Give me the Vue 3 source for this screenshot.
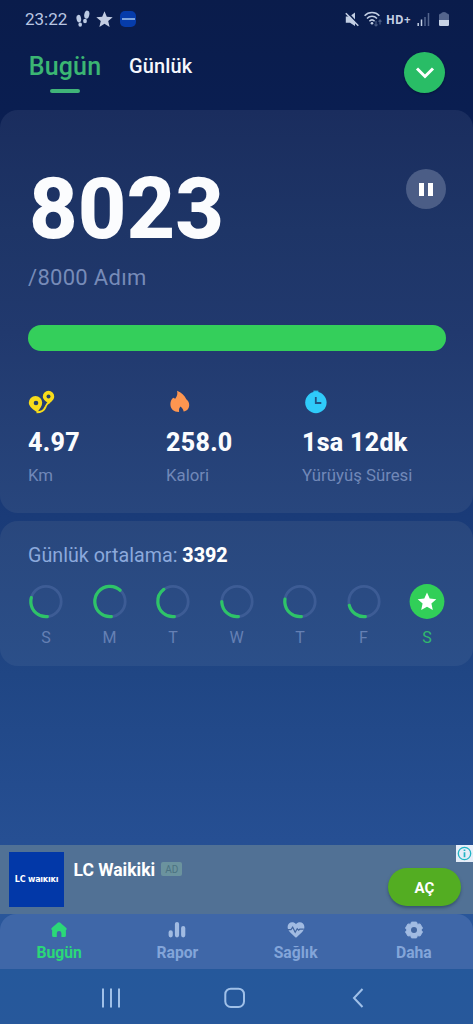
<script setup>
const stats = [
  { icon: 'route', value: '4.97', label: 'Km' },
  { icon: 'flame', value: '258.0', label: 'Kalori' },
  { icon: 'clock', value: '1sa 12dk', label: 'Yürüyüş Süresi' },
]
const days = [
  { name: 'S', arc: 105 },
  { name: 'M', arc: 222 },
  { name: 'T', arc: 143 },
  { name: 'W', arc: 90 },
  { name: 'T', arc: 99 },
  { name: 'F', arc: 75 },
  { name: 'S', done: true },
]
const tabs = [
  { icon: 'home', label: 'Bugün', active: true },
  { icon: 'chart', label: 'Rapor' },
  { icon: 'heart', label: 'Sağlık' },
  { icon: 'gear', label: 'Daha' },
]
</script>

<template>
  <div class="screen">
    <header class="status">
      <span class="time">23:22</span>
      <svg class="steps" width="14" height="18" viewBox="0 0 14 18">
        <g fill="#bccbe4">
          <ellipse cx="2.800" cy="8.600" rx="2.300" ry="3.800" transform="rotate(-10 3 8.600)" />
          <ellipse cx="4.200" cy="14.600" rx="1.800" ry="2.200" />
          <ellipse cx="10.800" cy="4.600" rx="2.500" ry="4.100" transform="rotate(12 10.600 4.600)" />
          <ellipse cx="9" cy="11" rx="1.900" ry="2.300" />
        </g>
      </svg>
      <svg class="star" width="17" height="17" viewBox="0 0 17 17">
        <path d="M8.500 0.300l2.300 5.400 5.900.5-4.500 3.900 1.400 5.800-5.100-3.100-5.100 3.100 1.400-5.800L.3 6.200l5.900-.5z" fill="#c3cde2" />
      </svg>
      <span class="app-chip"><i></i></span>
      <span class="grow"></span>
      <svg class="mute" width="14" height="15" viewBox="0 0 14 15">
        <path d="M.8 4.500h3.700L10 .5v13.500L5 10.700H.8z" fill="#c3cfe4" />
        <path d="M2 0l12 13" stroke="#0a1d4d" stroke-width="1.800" />
        <path d="M.8 1.300l12.500 12.500" stroke="#c3cfe4" stroke-width="1.600" />
      </svg>
      <svg class="wifi" width="19" height="16" viewBox="0 0 19 16">
        <g fill="none" stroke="#c3cfe4" stroke-width="1.500">
          <path d="M.6 4.700c4-4.300 10.800-4.300 14.800 0" />
          <path d="M3 7.500c2.800-2.900 7.200-2.900 10 0" />
          <path d="M5.400 10.200c1.500-1.500 3.700-1.500 5.200 0" />
        </g>
        <circle cx="8" cy="12.300" r="1.300" fill="#c3cfe4" />
        <path d="M12 10v5m-1.500-1.500L12 15l1.500-1.500M16 13.500V9m-1.500 1.700L16 9l1.500 1.700" fill="none" stroke="#485a83" stroke-width="1.200" />
      </svg>
      <span class="hd">HD+</span>
      <svg class="signal" width="13" height="13" viewBox="0 0 13 13">
        <path d="M1.200 10v3M4.500 6.500V13" stroke="#c3cfe4" stroke-width="1.500" />
        <path d="M8 4v9M11.500 0v13" stroke="#54658d" stroke-width="1.500" />
      </svg>
      <svg class="battery" width="10" height="14" viewBox="0 0 10 14">
        <path d="M0 8V3q0-1.500 2-1.500Q2.500 0 5 0t3 1.500q2 0 2 1.500v5z" fill="#54658d" />
        <path d="M0 8h10v4.700q0 1.300-1.300 1.300H1.300Q0 14 0 12.700z" fill="#c8d3e6" />
      </svg>
    </header>

    <nav class="views">
      <span class="view current">Bugün<i></i></span>
      <span class="view">Günlük</span>
      <span class="expand">
        <svg width="20" height="14" viewBox="0 0 20 14">
          <path d="M2 2.500l8 8 8-8" fill="none" stroke="#fff" stroke-width="3" />
        </svg>
      </span>
    </nav>

    <section class="card today">
      <div class="count-row">
        <span class="count">8023</span>
        <span class="pause"><i></i><i></i></span>
      </div>
      <div class="goal">/8000 Adım</div>
      <div class="bar"></div>
      <div class="stats">
        <div v-for="s in stats" :key="s.label" class="stat">
          <svg v-if="s.icon === 'route'" width="28" height="24" viewBox="0 0 28 24">
            <path d="M8.500 22.300q7 0 9-5.500 1-3 4-5" fill="none" stroke="#f7dc1b" stroke-width="2" />
            <path d="M7.500 6a6.700 6.700 0 0 1 6.700 6.700c0 3.500-2.500 6.300-4.700 9.300C6 20.500.8 16.500.8 12.700A6.700 6.700 0 0 1 7.500 6z" fill="#f7dc1b" />
            <path d="M20.500.8a5.700 5.700 0 0 1 5.700 5.700c0 3.500-3 5-5.200 7.200-2.200-1.700-6.200-3.700-6.200-7.200A5.700 5.700 0 0 1 20.500.8z" fill="#f7dc1b" />
            <circle cx="8" cy="13" r="2.300" fill="#24406b" />
            <circle cx="20.500" cy="6.500" r="2" fill="#24406b" />
          </svg>
          <svg v-else-if="s.icon === 'flame'" width="28" height="24" viewBox="0 0 28 24">
            <path d="M11 .8c4.500 1.700 7.500 4.800 9.300 8.500 1.900 1.500 2.900 3.500 2.900 5.600 0 3.600-2.300 6-5.600 6.700-.2-2.100-1.500-3.700-3.200-5-1.200 1.500-1.600 3-1.300 5.300-5.100.1-8.700-2.700-8.700-7.700 0-2.600 1-4.800 2.800-6.400l2 1C11.300 6 11.800 3.500 11 .8z" fill="#fd9650" />
          </svg>
          <svg v-else width="28" height="24" viewBox="0 0 28 24">
            <path d="M11.400.6h5v4h-5z" fill="#25bdec" />
            <circle cx="13.900" cy="12.500" r="10.700" fill="#2fcbfa" />
            <path d="M13.800 7v6h5.500" fill="none" stroke="#205383" stroke-width="1.800" />
          </svg>
          <strong>{{ s.value }}</strong>
          <span>{{ s.label }}</span>
        </div>
      </div>
    </section>

    <section class="card week">
      <div class="average">Günlük ortalama: <b>3392</b></div>
      <div class="days">
        <div v-for="(d, i) in days" :key="i" class="day" :class="{ done: d.done }">
          <svg width="36" height="36" viewBox="0 0 36 36">
            <template v-if="d.done">
              <circle cx="18" cy="18.500" r="17.400" fill="#31cf58" />
              <path d="M18 9.500l2.700 6 6.600.7-4.900 4.400 1.400 6.500-5.800-3.300-5.800 3.300 1.400-6.500-4.900-4.400 6.600-.7z" fill="#fff" />
            </template>
            <template v-else>
              <circle cx="18" cy="18.500" r="15.200" fill="none" stroke="#3d5c95" stroke-width="2.800" />
              <circle cx="18" cy="18.500" r="15.200" fill="none" stroke="#2ec468" stroke-width="3.200" stroke-linecap="round" pathLength="360" :stroke-dasharray="`${d.arc + 5} 360`" transform="rotate(85 18 18.500)" />
            </template>
          </svg>
          <span>{{ d.name }}</span>
        </div>
      </div>
    </section>

    <aside class="ad">
      <div class="brand">LC waıĸıĸı</div>
      <div class="ad-title">LC Waikiki <span>AD</span></div>
      <button class="open">AÇ</button>
      <span class="info">
        <svg width="17" height="17" viewBox="0 0 17 17">
          <circle cx="8.500" cy="8.500" r="6.200" fill="none" stroke="#20b4c4" stroke-width="1.300" />
          <path d="M8.500 7.300v5M8.500 4.400v1.700" stroke="#20b4c4" stroke-width="1.700" />
        </svg>
      </span>
    </aside>

    <div class="dock">
      <nav class="tabs">
        <div v-for="t in tabs" :key="t.label" class="tab" :class="{ active: t.active }">
          <svg width="18" height="18" viewBox="0 0 18 18">
            <path v-if="t.icon === 'home'" d="M9 1.300q.7 0 1.300.5l6 5.100q.9 1 .1 1.800l-.5.400v5.400q0 1.500-1.500 1.500h-3v-3.800a2.300 2.300 0 0 0-4.600 0V16H3.600q-1.500 0-1.500-1.500V9.100l-.5-.4q-.8-.8.1-1.800l6-5.100q.6-.5 1.300-.5z" fill="currentColor" />
            <path v-else-if="t.icon === 'chart'" d="M2.700 11.300v3M9 3v11.300M15.200 7v7.300" fill="none" stroke="currentColor" stroke-width="4.200" stroke-linecap="round" />
            <template v-else-if="t.icon === 'heart'">
              <path d="M9 16.800C5 13 .6 10 .6 6 .6 1 6.500-.2 9 3.300 11.500-.2 17.400 1 17.400 6c0 4-4.400 7-8.400 10.800z" fill="currentColor" />
              <path d="M0 8.700h4l1.700-2.500 2.500 5 2-3.500 1.400 1.500 1.200-1h4" fill="none" stroke="#41659f" stroke-width="1.200" />
            </template>
            <template v-else>
              <path d="M6.500 1h5l.9 2.200 2.700-.3 2.500 4.200L16 9l1.600 1.900-2.500 4.100-2.700-.2-.9 2.200h-5l-.9-2.200-2.700.2L.4 10.900 2 9 .4 7.100l2.500-4.200 2.700.3z" fill="currentColor" stroke="currentColor" stroke-linejoin="round" stroke-width=".8" />
              <circle cx="9" cy="9" r="3" fill="#41659f" />
            </template>
          </svg>
          <span>{{ t.label }}</span>
        </div>
      </nav>
    </div>

    <footer class="system">
      <svg width="20" height="20" viewBox="0 0 20 20"><path d="M2 .5v19M10 .5v19M18 .5v19" stroke="#a0c0e8" stroke-width="2" /></svg>
      <svg width="22" height="22" viewBox="0 0 22 22"><rect x="1.300" y="1.700" width="18.700" height="18.300" rx="5.500" fill="none" stroke="#a0c0e8" stroke-width="2" /></svg>
      <svg width="12" height="20" viewBox="0 0 12 20"><path d="M10.500 1L2 10l8.500 9" fill="none" stroke="#a0c0e8" stroke-width="2" /></svg>
    </footer>
  </div>
</template>

<style>
body {
  margin: 0;
}
</style>

<style scoped>
.screen {
  width: 473px;
  height: 1024px;
  display: flex;
  flex-direction: column;
  overflow: hidden;
  font-family: Roboto, "Liberation Sans", sans-serif;
  background: linear-gradient(#0a1c4b 0, #0a1e51 110px, #1a3b78 517px, #204684 675px, #264f93 840px, #25589b 969px, #27589b 1024px);
}
svg {
  display: block;
  flex: none;
}
.status {
  height: 38px;
  display: flex;
  align-items: center;
  box-sizing: border-box;
  padding: 0 24px 0 25px;
  flex: none;
}
.time {
  font-size: 17px;
  line-height: 20px;
  color: #b9c6e2;
  width: 51px;
}
.star {
  margin-left: 6px;
}
.app-chip {
  width: 16px;
  height: 16px;
  border-radius: 5px;
  background: #063caa;
  margin-left: 7px;
  display: flex;
  align-items: center;
  justify-content: center;
}
.app-chip i {
  width: 13px;
  height: 2px;
  background: #7da4dc;
}
.grow {
  flex: 1;
}
.wifi {
  margin-left: 5px;
}
.hd {
  font: 700 11.500px/13px "Open Sans", "Noto Sans", sans-serif;
  width: 25px;
  color: #c3cfe4;
  margin-left: 3px;
  white-space: nowrap;
  letter-spacing: 0.3px;
}
.signal {
  margin-left: 6px;
}
.battery {
  margin-left: 9px;
}
.views {
  height: 72px;
  flex: none;
  display: flex;
  align-items: flex-start;
  box-sizing: border-box;
  padding: 13px 28px 0 29px;
}
.view {
  font-size: 20px;
  font-weight: 500;
  line-height: 30px;
  color: #f5f7fd;
  letter-spacing: 0.15px;
}
.view.current {
  font-size: 25px;
  line-height: 31px;
  font-weight: 480;
  color: #3bb673;
  width: 72px;
  margin-right: 28px;
  display: flex;
  flex-direction: column;
  align-items: center;
}
.view i {
  width: 30px;
  height: 4px;
  border-radius: 2px;
  background: #40b478;
  margin-top: 7px;
}
.expand {
  width: 41px;
  height: 41px;
  border-radius: 50%;
  background: #29bd66;
  margin: 1px 0 0 auto;
  display: flex;
  align-items: center;
  justify-content: center;
  box-shadow: 0 1px 2px #06153a;
}
.card {
  flex: none;
  box-sizing: border-box;
  border-radius: 18px;
  padding-left: 28px;
  padding-right: 27px;
}
.today {
  height: 403px;
  background: linear-gradient(#1a2d5e, #1e3567 30%, #21396e 55%, #28467d);
  padding-top: 58px;
}
.count-row {
  display: flex;
  justify-content: space-between;
}
.count {
  font-size: 84.500px;
  line-height: 84px;
  font-weight: 800;
  color: #fbfcfe;
  margin-left: 1px;
}
.pause {
  width: 40px;
  height: 40px;
  margin: 1px 0 0;
  border-radius: 50%;
  background: #4b5d86;
  display: flex;
  align-items: center;
  justify-content: center;
  gap: 4px;
}
.pause i {
  width: 5px;
  height: 13px;
  background: #fff;
}
.goal {
  font-size: 22px;
  line-height: 28px;
  font-weight: 400;
  letter-spacing: 0.3px;
  color: #778bb8;
  margin-top: 12px;
}
.bar {
  height: 26px;
  width: 418px;
  border-radius: 13px;
  background: #34cf5b;
  margin-top: 33px;
}
.stats {
  display: grid;
  grid-template-columns: 138px 136px 1fr;
  margin-top: 39px;
}
.stat {
  display: flex;
  flex-direction: column;
}
.stat strong {
  font-size: 25px;
  line-height: 30px;
  font-weight: 800;
  color: #fbfcfe;
  margin-top: 14px;
  letter-spacing: 0.3px;
  white-space: nowrap;
}
.stat span {
  font-size: 16.8px;
  line-height: 20px;
  color: #7188b8;
  margin-top: 7px;
  white-space: nowrap;
}
.week {
  height: 145px;
  margin-top: 8px;
  padding-top: 23px;
  background: linear-gradient(#29477d, #2b4f89);
}
.average {
  font-size: 19.7px;
  line-height: 24px;
  color: #8ca9dc;
}
.average b {
  color: #fff;
  font-weight: 800;
}
.days {
  display: flex;
  justify-content: space-between;
  margin-top: 15px;
  margin-right: 1px;
}
.day {
  width: 36px;
  display: flex;
  flex-direction: column;
  align-items: center;
}
.day span {
  font-size: 16px;
  line-height: 20px;
  color: #6580b4;
  margin-top: 9px;
}
.day.done span {
  color: #31b96d;
}
.ad {
  height: 69px;
  flex: none;
  margin-top: auto;
  background: #517195;
  display: flex;
  position: relative;
  box-sizing: border-box;
  padding-left: 9px;
}
.brand {
  width: 55px;
  height: 55px;
  margin-top: 7px;
  background: #0238a8;
  color: #fff;
  font: 700 8px/55px "DejaVu Sans", sans-serif;
  letter-spacing: -0.2px;
  text-align: center;
  white-space: nowrap;
}
.ad-title {
  font-size: 17.5px;
  line-height: 22px;
  font-weight: 700;
  color: #fff;
  margin: 14px 0 0 9.500px;
  height: 22px;
  display: flex;
  align-items: center;
  white-space: nowrap;
}
.ad-title span {
  width: 21px;
  height: 14px;
  border-radius: 2px;
  background: #6b939e;
  color: #4c7281;
  font-size: 10px;
  line-height: 15px;
  font-weight: 400;
  text-align: center;
  margin: -2px 0 0 6px;
}
.open {
  width: 73px;
  height: 38px;
  border: 0;
  padding: 0;
  margin: 23px 12px 0 auto;
  border-radius: 19px;
  background: #53ad22;
  color: #fff;
  font: 700 15px/40px Roboto, sans-serif;
  box-shadow: 0 2px 3px rgba(30, 55, 80, 0.5);
}
.info {
  position: absolute;
  right: 0;
  top: 0;
  width: 17px;
  height: 17px;
  background: #e5edf8;
}
.dock {
  flex: none;
  background: #29569a;
}
.tabs {
  height: 55px;
  border-radius: 16px 16px 0 0;
  background: #3f67a8;
  display: grid;
  grid-template-columns: repeat(4, 1fr);
}
.tab {
  display: flex;
  flex-direction: column;
  align-items: center;
  padding-top: 7px;
  color: #a1bbe2;
}
.tab span {
  font-size: 15.700px;
  line-height: 20px;
  font-weight: 700;
  color: #83a5d9;
  margin-top: 4px;
}
.tab.active,
.tab.active span {
  color: #2bd878;
}
.system {
  height: 55px;
  flex: none;
  display: grid;
  grid-template-columns: 123px 124px 12px;
  align-items: center;
  box-sizing: border-box;
  padding: 2px 0 0 101px;
}
.system svg:last-child {
  margin-left: 4px;
}
</style>
